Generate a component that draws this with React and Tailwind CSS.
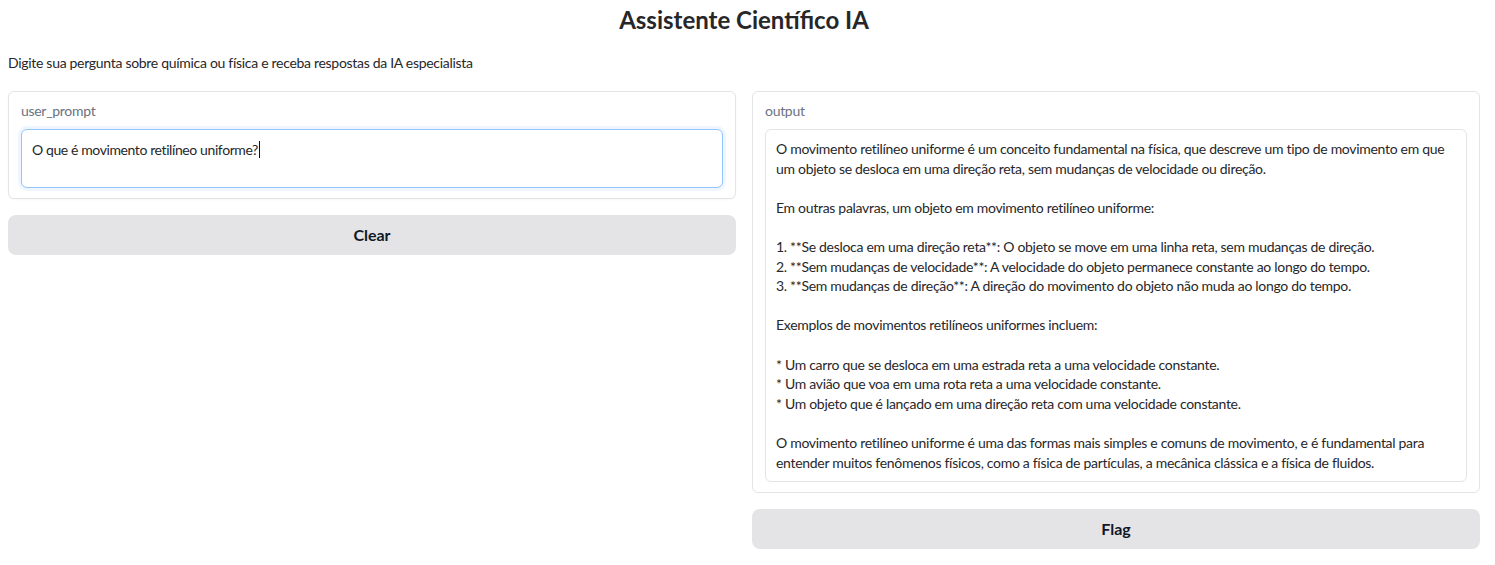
export default function App() {
  const font = { fontFamily: 'Lato, "Liberation Sans", sans-serif' };
  const lines = [
    "O movimento retilíneo uniforme é um conceito fundamental na física, que descreve um tipo de movimento em que um objeto se desloca em uma direção reta, sem mudanças de velocidade ou direção.",
    "",
    "Em outras palavras, um objeto em movimento retilíneo uniforme:",
    "",
    "1. **Se desloca em uma direção reta**: O objeto se move em uma linha reta, sem mudanças de direção.\n2. **Sem mudanças de velocidade**: A velocidade do objeto permanece constante ao longo do tempo.\n3. **Sem mudanças de direção**: A direção do movimento do objeto não muda ao longo do tempo.",
    "",
    "Exemplos de movimentos retilíneos uniformes incluem:",
    "",
    "* Um carro que se desloca em uma estrada reta a uma velocidade constante.\n* Um avião que voa em uma rota reta a uma velocidade constante.\n* Um objeto que é lançado em uma direção reta com uma velocidade constante.",
    "",
    "O movimento retilíneo uniforme é uma das formas mais simples e comuns de movimento, e é fundamental para entender muitos fenômenos físicos, como a física de partículas, a mecânica clássica e a física de fluidos.",
  ];
  return (
    <div className="min-h-[565px] w-[1495px] bg-white text-[#27272a]" style={font}>
      <div className="pl-2 pr-[15px]">
        <h1 className="pt-[3px] text-center text-[24px] font-bold leading-[34px] text-[#27272a]">
          Assistente Científico IA
        </h1>
        <p className="mt-[16px] text-[14px] leading-[20px] tracking-[-0.3px]">
          Digite sua pergunta sobre química ou física e receba respostas da IA especialista
        </p>
        <div className="mt-[18px] grid grid-cols-[728px_728px] gap-4">
          <div className="flex flex-col gap-4">
            <div className="rounded-[6px] border border-[#e4e4e7] bg-white px-3 pb-[10px] pt-[9px] shadow-[0_1px_2px_rgba(0,0,0,0.03)]">
              <div className="text-[14px] leading-[20px] text-[#6b7280] tracking-[-0.3px]">user_prompt</div>
              <div className="mt-[8px] h-[59px] rounded-[6px] border border-[#93c5fd] bg-white px-[10px] py-[8px] text-[14px] leading-[20px] shadow-[0_0_0_3px_#eff6ff] tracking-[-0.4px]">
                O que é movimento retilíneo uniforme?<span className="ml-px inline-block h-[17px] w-px translate-y-[3px] bg-[#111]" />
              </div>
            </div>
            <button className="h-[40px] w-full rounded-[8px] bg-[#e4e4e7] text-[16px] font-bold text-[#111827]">
              Clear
            </button>
          </div>
          <div className="flex flex-col gap-4">
            <div className="rounded-[6px] border border-[#e4e4e7] bg-white px-3 pb-[10px] pt-[9px]">
              <div className="text-[14px] leading-[20px] text-[#6b7280] tracking-[-0.3px]">output</div>
              <div className="mt-[8px] h-[353px] whitespace-pre-wrap rounded-[6px] border border-[#e4e4e7] bg-white px-[10px] py-[9px] text-[14px] leading-[19.6px] tracking-[-0.3px]">
                {lines.join("\n")}
              </div>
            </div>
            <button className="h-[40px] w-full rounded-[8px] bg-[#e4e4e7] text-[16px] font-bold text-[#111827]">
              Flag
            </button>
          </div>
        </div>
      </div>
    </div>
  );
}
